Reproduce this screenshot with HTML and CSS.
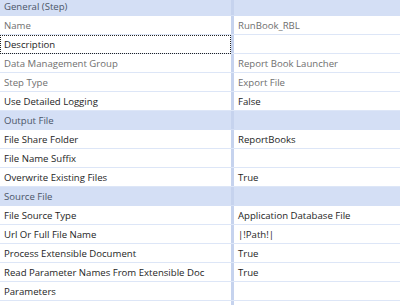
FILE: index.html
```html
<!DOCTYPE html>
<html>
<head>
<meta charset="utf-8">
<link rel="stylesheet" href="styles.css">
</head>
<body>
<div class="grid">
  <div class="row cat"><div class="label">General (Step)</div><div class="value"></div></div>
  <div class="row ro"><div class="label">Name</div><div class="value">RunBook_RBL</div></div>
  <div class="row"><div class="label focus">Description</div><div class="value"></div></div>
  <div class="row ro"><div class="label">Data Management Group</div><div class="value">Report Book Launcher</div></div>
  <div class="row ro"><div class="label">Step Type</div><div class="value">Export File</div></div>
  <div class="row"><div class="label">Use Detailed Logging</div><div class="value">False</div></div>
  <div class="row cat"><div class="label">Output File</div><div class="value"></div></div>
  <div class="row"><div class="label">File Share Folder</div><div class="value">ReportBooks</div></div>
  <div class="row"><div class="label">File Name Suffix</div><div class="value"></div></div>
  <div class="row"><div class="label">Overwrite Existing Files</div><div class="value">True</div></div>
  <div class="row cat"><div class="label">Source File</div><div class="value"></div></div>
  <div class="row"><div class="label">File Source Type</div><div class="value">Application Database File</div></div>
  <div class="row"><div class="label">Url Or Full File Name</div><div class="value">|!Path!|</div></div>
  <div class="row"><div class="label">Process Extensible Document</div><div class="value">True</div></div>
  <div class="row"><div class="label">Read Parameter Names From Extensible Doc</div><div class="value">True</div></div>
  <div class="row"><div class="label">Parameters</div><div class="value"></div></div>
  <div class="row tail"><div class="label"></div><div class="value"></div></div>
</div>
</body>
</html>
```
FILE: styles.css
```css
html, body {
  margin: 0;
  padding: 0;
  background: #ffffff;
  overflow: hidden;
}
.grid {
  margin-top: -3px;
  font-family: "Open Sans", "Noto Sans", sans-serif;
  font-size: 9.6px;
  color: #1e1e1e;
}
.row {
  display: grid;
  grid-template-columns: 231px 1fr;
  height: 19px;
  box-sizing: border-box;
  border-bottom: 1px solid #dde6f7;
}
.label, .value {
  display: flex;
  align-items: center;
  white-space: nowrap;
  overflow: hidden;
  padding-left: 4px;
}
.label {
  padding-right: 4px;
}
.value {
  border-left: 3px solid #c6d3ee;
  padding-left: 4px;
}
.cat {
  background: #d4dff5;
  border-bottom-color: #d4dff5;
}
.cat .label {
  color: #4b5568;
}
.ro .label, .ro .value {
  color: #6f6f6f;
}
.focus {
  outline: 1px dotted #222;
  outline-offset: -1px;
  margin-bottom: -1px;
}
```
